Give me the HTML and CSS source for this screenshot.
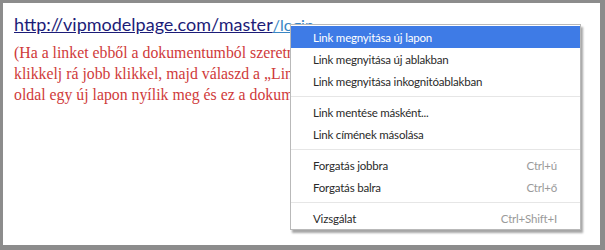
FILE: index.html
```html
<!DOCTYPE html>
<html lang="hu">
<head>
    <meta charset="UTF-8">
    <title>Link megnyitása</title>
    <link rel="stylesheet" href="styles.css">
</head>
<body>

    <div class="frame">
        <div class="doc">
            <p class="url-line">
                <a class="url" href="#">http://vipmodelpage.com/master</a><a class="url-tail" href="#">/login</a>
            </p>
            <p class="note">
                <span>(Ha a linket ebből a dokumentumból szeretnéd megnyitni, akkor</span>
                <span>klikkelj rá jobb klikkel, majd válaszd a „Link megnyitása új lapon”</span>
                <span>oldal egy új lapon nyílik meg és ez a dokumentum nyitva marad.)</span>
            </p>
        </div>

        <ul class="menu">
            <li class="item active">Link megnyitása új lapon</li>
            <li class="item">Link megnyitása új ablakban</li>
            <li class="item">Link megnyitása inkognitóablakban</li>
            <li class="sep"></li>
            <li class="item">Link mentése másként...</li>
            <li class="item">Link címének másolása</li>
            <li class="sep"></li>
            <li class="item">Forgatás jobbra <span class="key">Ctrl+ú</span></li>
            <li class="item">Forgatás balra <span class="key">Ctrl+ő</span></li>
            <li class="sep"></li>
            <li class="item">Vizsgálat <span class="key">Ctrl+Shift+I</span></li>
        </ul>
    </div>

</body>
</html>
```

FILE: styles.css
```css
body {
    margin: 0;
    padding: 0;
    background-color: #fff;
}
.frame {
    position: relative;
    width: 597px;
    height: 242px;
    border-style: solid;
    border-color: #8c8c8c;
    border-width: 3px 5px 5px 3px;
    background-color: #fff;
    overflow: hidden;
}
.doc {
    padding: 10px 0 0 11px;
}
.url-line {
    margin: 0;
    white-space: nowrap;
    font-family: Lato, Arial, sans-serif;
    line-height: 22px;
}
.url {
    font-size: 18px;
    color: #1c1c78;
    text-decoration: underline;
}
.url-tail {
    font-size: 16px;
    color: #3a86c4;
    text-decoration: underline;
}
.note {
    margin: 6px 0 0 0;
    font-family: "Liberation Serif", "Times New Roman", serif;
    font-size: 15.8px;
    line-height: 21px;
    color: #cf3a3a;
    white-space: nowrap;
}
.note span {
    display: block;
}
.menu {
    position: absolute;
    left: 287px;
    top: 21px;
    width: 289px;
    margin: 0;
    padding: 1px 0 0 0;
    list-style: none;
    background-color: #fff;
    border: 1px solid #b9b9b9;
    box-shadow: 2px 3px 2px rgba(0, 0, 0, 0.35);
    font-family: Lato, Arial, sans-serif;
    font-size: 11.5px;
    letter-spacing: -0.2px;
    color: #2a2a2a;
}
.item {
    display: flex;
    justify-content: space-between;
    align-items: center;
    height: 22px;
    padding: 0 23px 0 22px;
}
.item.active {
    background-color: #3e7be6;
    color: #fff;
}
.key {
    color: #9a9a9a;
}
.sep {
    height: 1px;
    margin: 4px 0 4px 0;
    background-color: #e6e6e6;
}
```
